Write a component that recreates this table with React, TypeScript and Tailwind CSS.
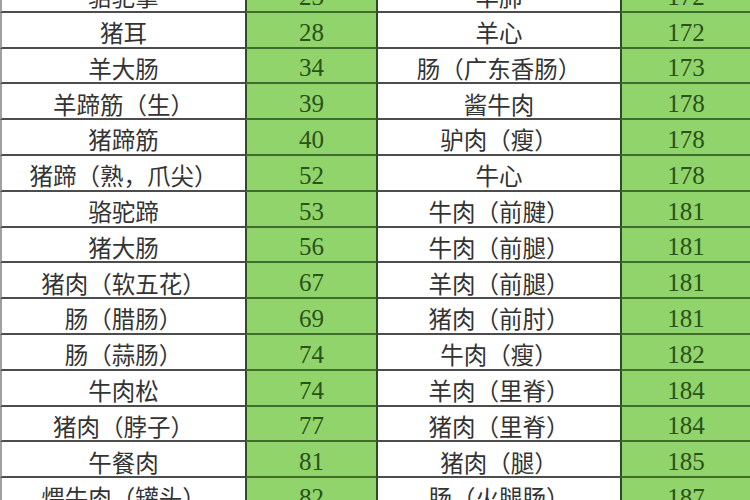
const ROWS: [string, number, string, number][] = [
  ["骆驼掌", 23, "羊肺", 172],
  ["猪耳", 28, "羊心", 172],
  ["羊大肠", 34, "肠（广东香肠）", 173],
  ["羊蹄筋（生）", 39, "酱牛肉", 178],
  ["猪蹄筋", 40, "驴肉（瘦）", 178],
  ["猪蹄（熟，爪尖）", 52, "牛心", 178],
  ["骆驼蹄", 53, "牛肉（前腱）", 181],
  ["猪大肠", 56, "牛肉（前腿）", 181],
  ["猪肉（软五花）", 67, "羊肉（前腿）", 181],
  ["肠（腊肠）", 69, "猪肉（前肘）", 181],
  ["肠（蒜肠）", 74, "牛肉（瘦）", 182],
  ["牛肉松", 74, "羊肉（里脊）", 184],
  ["猪肉（脖子）", 77, "猪肉（里脊）", 184],
  ["午餐肉", 81, "猪肉（腿）", 185],
  ["煨牛肉（罐头）", 82, "肠（火腿肠）", 187],
];

function NameCell({ text, first }: { text: string; first?: boolean }) {
  return (
    <div
      className={`flex h-full items-center justify-center border-b-2 border-[#4d4d4d] bg-white pt-[6px] text-[23.5px] leading-none text-[#333] ${
        first ? "border-l-2 border-l-[#a0a0a0]" : "border-l-2 border-l-[#2f4a26]"
      }`}
      style={{ fontFamily: '"Noto Sans CJK SC", sans-serif' }}
    >
      {text}
    </div>
  );
}

function NumCell({ value }: { value: number }) {
  return (
    <div className="flex items-center justify-center border-b-2 border-l-2 border-b-[#3f6e2c] border-l-[#2f4a26] bg-[#90d46b] pt-[5px] font-['Liberation_Serif',serif] text-[25px] leading-none text-[#2a5219]">
      {value}
    </div>
  );
}

export default function App() {
  return (
    <div className="h-[500px] w-[750px] overflow-hidden bg-white">
      <div className="-mt-[23px]">
        {ROWS.map(([a, x, b, y], i) => (
          <div
            key={i}
            className="grid h-[35.8px] grid-cols-[245px_131px_244px_130px]"
          >
            <NameCell text={a} first />
            <NumCell value={x} />
            <NameCell text={b} />
            <NumCell value={y} />
          </div>
        ))}
      </div>
    </div>
  );
}
